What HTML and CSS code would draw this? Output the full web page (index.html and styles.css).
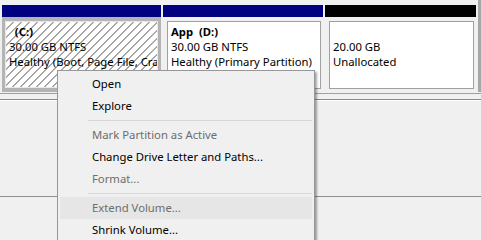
FILE: index.html
```html
<!DOCTYPE html>
<html lang="en">
<head>
  <meta charset="UTF-8">
  <title>Disk Management</title>
  <link rel="stylesheet" href="styles.css">
</head>
<body>
  <div class="disk-row">
    <div class="partitions">
      <div class="part part-c selected">
        <div class="part-bar bar-primary"></div>
        <div class="part-body">
          <div class="part-box hatched">
            <p class="vol-name">  (C:)</p>
            <p>30.00 GB NTFS</p>
            <p>Healthy (Boot, Page File, Cras</p>
          </div>
        </div>
      </div>
      <div class="part part-d">
        <div class="part-bar bar-primary"></div>
        <div class="part-body">
          <div class="part-box">
            <p class="vol-name">App  (D:)</p>
            <p>30.00 GB NTFS</p>
            <p>Healthy (Primary Partition)</p>
          </div>
        </div>
      </div>
      <div class="part part-free">
        <div class="part-bar bar-free"></div>
        <div class="part-body">
          <div class="part-box">
            <p>&nbsp;</p>
            <p>20.00 GB</p>
            <p>Unallocated</p>
          </div>
        </div>
      </div>
    </div>
    <div class="row-edge"></div>
  </div>
  <div class="disk-split"></div>
  <div class="lower-pane">
    <div class="lower-line"></div>
  </div>

  <ul class="ctx-menu">
    <li>Open</li>
    <li>Explore</li>
    <li class="sep"></li>
    <li class="disabled">Mark Partition as Active</li>
    <li>Change Drive Letter and Paths...</li>
    <li class="disabled">Format...</li>
    <li class="sep"></li>
    <li class="disabled hover">Extend Volume...</li>
    <li>Shrink Volume...</li>
  </ul>
</body>
</html>
```

FILE: styles.css
```css
:root {
  --bg: #f0f0f0;
  --frame: #a0a0a0;
  --navy: #000080;
  --font: 'Noto Sans', 'Open Sans', sans-serif;
}
* { box-sizing: border-box; margin: 0; padding: 0; }
body { width: 481px; height: 240px; overflow: hidden; background: var(--bg); font-family: var(--font); font-size: 11.3px; color: #000; position: relative; }

/* disk graph row */
.disk-row { display: flex; height: 92px; }
.partitions { display: flex; gap: 2px; padding: 5px 0 0 2px; width: 478px; }
.row-edge { width: 3px; background: #a7a7a7; }
.part { display: flex; flex-direction: column; }
.part-c { width: 159px; }
.part-d { width: 160px; }
.part-free { width: 151px; }
.part-bar { height: 12px; }
.bar-primary { background: var(--navy); }
.bar-free { background: #000; }
.part-body { flex: 1; padding: 4px 2px 3px 4px; background: var(--bg); }
.selected .part-body { padding: 4px 3px 4px 3px; background: #b4b4b4; }
.part-box { height: 100%; border: 1px solid var(--frame); background: #fff; padding: 2px 0 0 3px; overflow: hidden; }
.part-box p { height: 15px; line-height: 15px; white-space: pre; }
.vol-name { font-weight: bold; }
.hatched { border-color: #e8e8e8; background: repeating-linear-gradient(135deg, #fff 0, #fff 4.6px, #a8a8a8 4.6px, #a8a8a8 5.66px); }

.disk-split { height: 7px; border-top: 1px solid var(--frame); border-bottom: 1px solid #8a8a8a; box-shadow: 0 1px 0 #fff; margin-top: 1px; }
.lower-pane { padding-top: 96px; }
.lower-line { height: 1px; background: #8f8f8f; }

/* context menu */
.ctx-menu { position: absolute; left: 57px; top: 70px; width: 258px; height: 190px; list-style: none; background: var(--bg); border: 1px solid #979797; padding: 2px; box-shadow: 2px 2px 2px rgba(0, 0, 0, 0.35); }
.ctx-menu li { height: 22px; line-height: 22px; padding-left: 32px; white-space: nowrap; }
.ctx-menu li.disabled { color: #6d6d6d; }
.ctx-menu li.hover { background: #e6e6e6; }
.ctx-menu li.sep { height: 7px; padding: 3px 0 0 0; margin-left: 28px; }
.ctx-menu li.sep::after { content: ''; display: block; height: 1px; background: #d7d7d7; }
```
